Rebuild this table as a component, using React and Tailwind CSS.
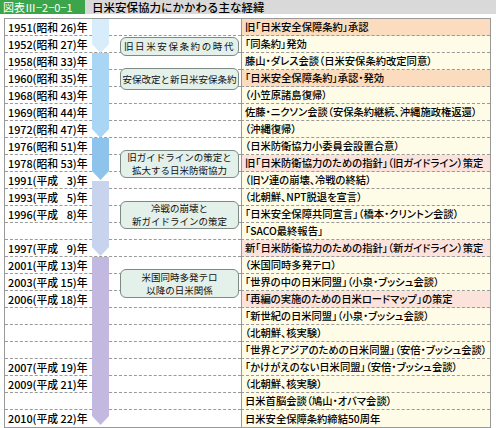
const rows = [
  ['1951(昭和 26)年', '旧「日米安全保障条約」承認', 'bg-[#fbdcbf]'],
  ['1952(昭和 27)年', '「同条約」発効', 'bg-[#fefce6]'],
  ['1958(昭和 33)年', '藤山・ダレス会談（日米安保条約改定同意）', 'bg-[#fefce6]'],
  ['1960(昭和 35)年', '「日米安全保障条約」承認・発効', 'bg-[#fbdcbf]'],
  ['1968(昭和 43)年', '（小笠原諸島復帰）', 'bg-[#fefce6]'],
  ['1969(昭和 44)年', '佐藤・ニクソン会談（安保条約継続、沖縄施政権返還）', 'bg-[#fefce6]'],
  ['1972(昭和 47)年', '（沖縄復帰）', 'bg-[#fefce6]'],
  ['1976(昭和 51)年', '（日米防衛協力小委員会設置合意）', 'bg-[#fefce6]'],
  ['1978(昭和 53)年', '旧「日米防衛協力のための指針」（旧ガイドライン）策定', 'bg-[#fbe3dc]'],
  ['1991(平成 \u20073)年', '（旧ソ連の崩壊、冷戦の終結）', 'bg-[#fefce6]'],
  ['1993(平成 \u20075)年', '（北朝鮮、NPT脱退を宣言）', 'bg-[#fefce6]'],
  ['1996(平成 \u20078)年', '「日米安全保障共同宣言」（橋本・クリントン会談）', 'bg-[#fefce6]'],
  ['', '「SACO最終報告」', 'bg-[#fefce6]'],
  ['1997(平成 \u20079)年', '新「日米防衛協力のための指針」（新ガイドライン）策定', 'bg-[#fbe3dc]'],
  ['2001(平成 13)年', '（米国同時多発テロ）', 'bg-[#fefce6]'],
  ['2003(平成 15)年', '「世界の中の日米同盟」（小泉・ブッシュ会談）', 'bg-[#fefce6]'],
  ['2006(平成 18)年', '「再編の実施のための日米ロードマップ」の策定', 'bg-[#fbe3dc]'],
  ['', '「新世紀の日米同盟」（小泉・ブッシュ会談）', 'bg-[#fefce6]'],
  ['', '（北朝鮮、核実験）', 'bg-[#fefce6]'],
  ['', '「世界とアジアのための日米同盟」（安倍・ブッシュ会談）', 'bg-[#fefce6]'],
  ['2007(平成 19)年', '「かけがえのない日米同盟」（安倍・ブッシュ会談）', 'bg-[#fefce6]'],
  ['2009(平成 21)年', '（北朝鮮、核実験）', 'bg-[#fefce6]'],
  ['', '日米首脳会談（鳩山・オバマ会談）', 'bg-[#fefce6]'],
  ['2010(平成 22)年', '日米安全保障条約締結50周年', 'bg-[#fefce6]'],
]

// arrow pieces down the timeline
const segs = [
  { place: 'row-start-1 row-span-2', bg: 'bg-[#d7edfa]', fill: '#d7edfa' },
  { place: 'row-start-3 row-span-5', bg: 'bg-[#a9d6f4]', fill: '#a9d6f4' },
  { place: 'row-start-8 row-span-2 mb-[-8px]', bg: 'bg-[#8ec3ec]', fill: '#8ec3ec' },
  { place: 'row-start-10 row-span-5 mt-[9px] mb-[1px]', bg: 'bg-[#c8d3ee]', fill: '#c8d3ee' },
  { place: 'row-start-15 row-span-10 mb-[2px]', bg: 'bg-[#c3b8df]', fill: '#c3b8df' },
]

const boxes = [
  { place: 'row-start-2 row-span-2 mt-[1px] h-[19px] tracking-[1.6px]', lines: ['旧日米安保条約の時代'] },
  { place: 'row-start-3 row-span-3 mt-[15px] h-[22px]', lines: ['安保改定と新日米安保条約'] },
  { place: 'row-start-8 row-span-3 mt-[12px] h-[28px]', lines: ['旧ガイドラインの策定と', '拡大する日米防衛協力'] },
  { place: 'row-start-11 row-span-3 mt-[12px] h-[28px]', lines: ['冷戦の崩壊と', '新ガイドラインの策定'] },
  { place: 'row-start-15 row-span-3 mt-[12px] h-[29px]', lines: ['米国同時多発テロ', '以降の日米関係'] },
]

function Segment({ place, bg, fill }) {
  return (
    <div className={`col-start-2 flex flex-col ${place}`}>
      <div className={`flex-1 ${bg}`} />
      <svg width="17" height="9" viewBox="0 0 17 9" className="block shrink-0">
        <polygon points="0,0 17,0 8.5,9" fill={fill} />
      </svg>
    </div>
  )
}

export default function App() {
  return (
    <div className="w-[496px] h-[428px] bg-white overflow-hidden text-black font-['Noto_Sans_CJK_JP','Noto_Sans',sans-serif]">
      <div className="flex h-[14px]">
        <div className="w-[85px] bg-[#3ba54c] text-white text-[11px] leading-[14px] pl-[3px]">図表Ⅲ−2−0−1</div>
        <div className="flex-1 bg-[#d9d9d9] text-[11.5px] leading-[14px] pl-[7px] font-medium">日米安保協力にかかわる主な経緯</div>
      </div>

      <div className="mt-[4px] ml-[4px] w-[487px] border border-[#999] grid">
        <div className="col-start-1 row-start-1 flex flex-col">
          {rows.map(([year, text, bg], i) => {
            const line = i < rows.length - 1 ? 'border-b border-dashed border-[#9a9a9a]' : ''
            return (
              <div key={i} className="flex h-[17px]">
                <div className={`w-[236px] flex items-center pl-[3px] text-[10.8px] font-medium [font-feature-settings:'palt'] ${line}`}>{year}</div>
                <div className={`flex-1 flex items-center pl-[4px] text-[10.3px] font-medium whitespace-nowrap [font-feature-settings:'palt'] ${bg} ${line}`}>{text}</div>
              </div>
            )
          })}
        </div>

        <div className="col-start-1 row-start-1 grid grid-cols-[87px_17px_132px_1fr] grid-rows-[repeat(24,17px)]">
          <div className="col-start-4 row-span-full border-l border-[#999]" />
          {segs.map((s, i) => (
            <Segment key={i} {...s} />
          ))}
          {boxes.map((b, i) => (
            <div
              key={i}
              className={`col-start-3 self-start ml-[11px] w-[119px] flex flex-col items-center justify-center rounded-[6px] border border-[#7d8a84] bg-[#e4f0ea] text-[9.5px] leading-[13px] whitespace-nowrap text-[#111] ${b.place}`}
            >
              {b.lines.map((l) => (
                <span key={l}>{l}</span>
              ))}
            </div>
          ))}
        </div>
      </div>
    </div>
  )
}
